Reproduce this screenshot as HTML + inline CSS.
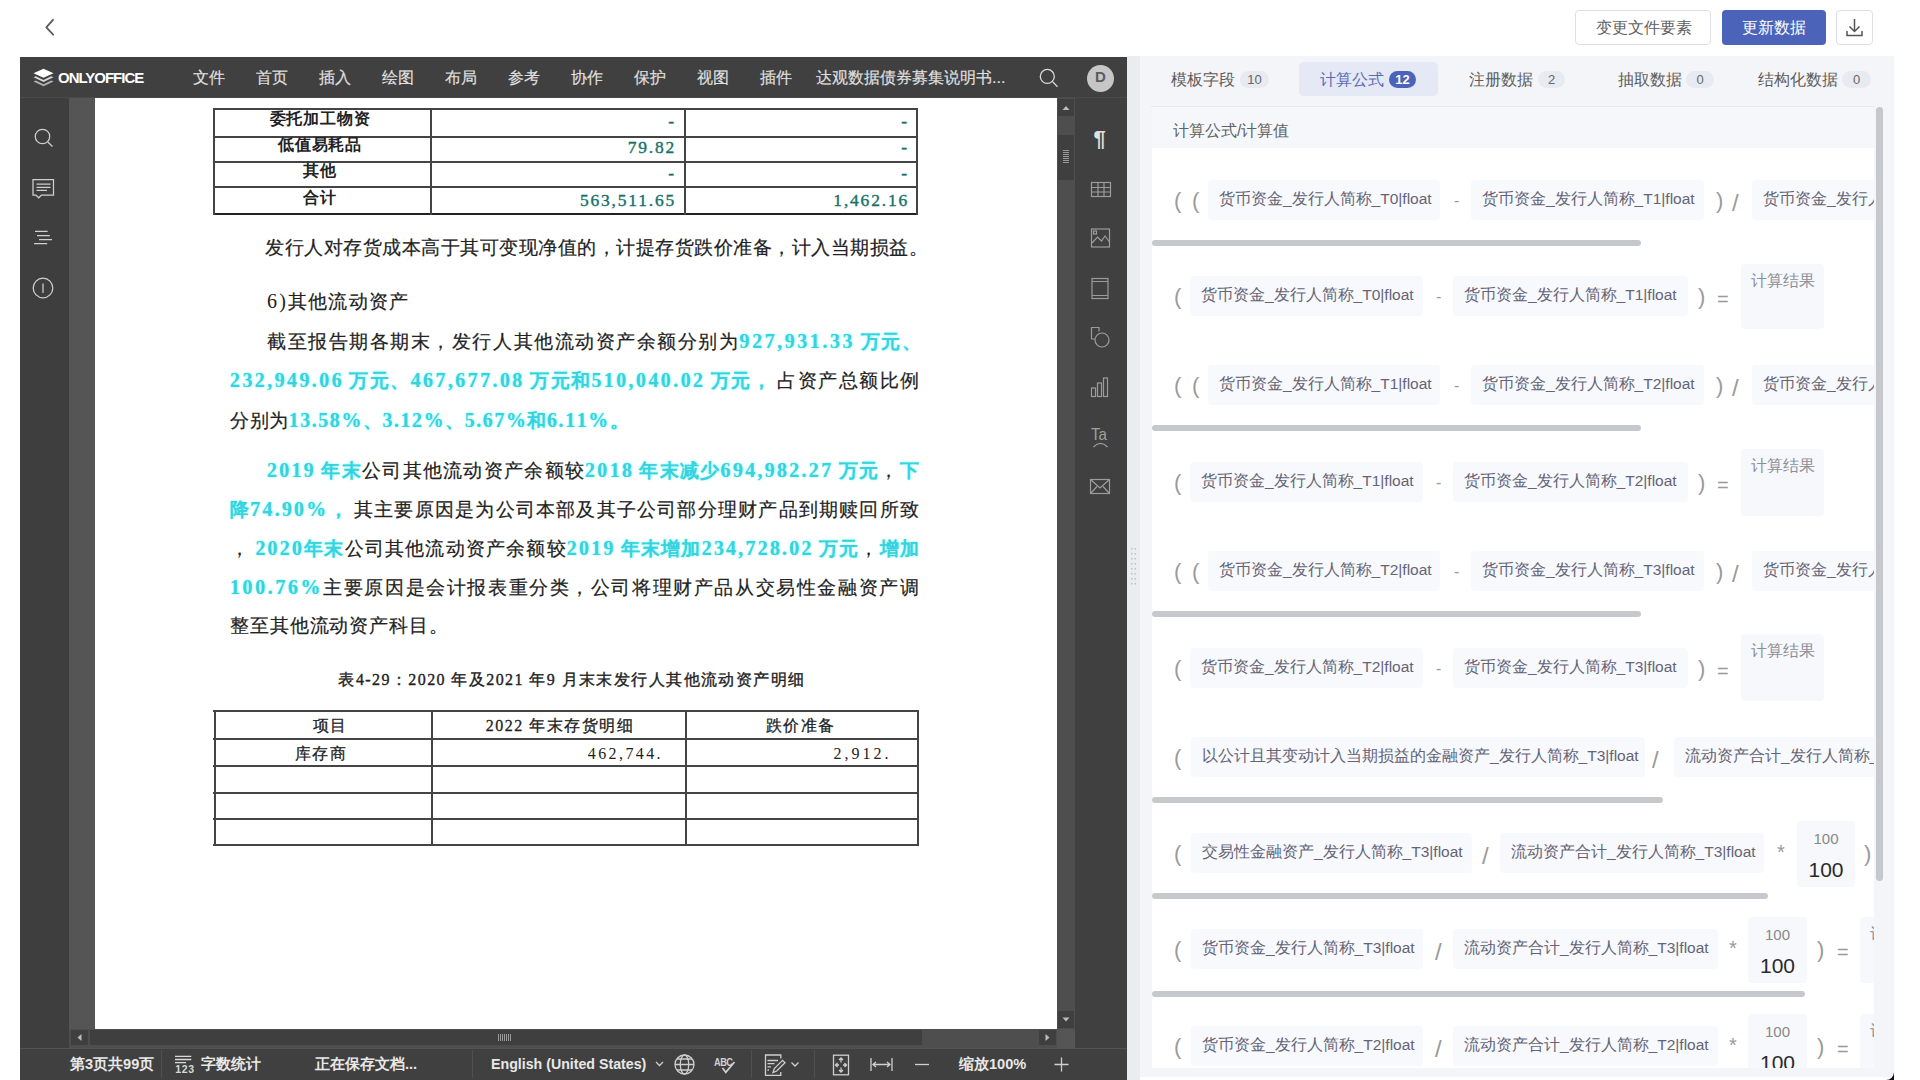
<!DOCTYPE html>
<html><head><meta charset="utf-8"><title>ONLYOFFICE</title>
<style>
*{margin:0;padding:0;box-sizing:border-box}
html,body{width:1920px;height:1080px;overflow:hidden;background:#fff}
body{position:relative;font-family:"Liberation Sans",sans-serif}
.a{position:absolute}
.t{white-space:nowrap}
svg{position:absolute;overflow:visible}
.doc{font-family:"Liberation Serif",serif;color:#222;font-size:18px}
.fl{display:flex;align-items:baseline;white-space:nowrap}
.fl span{display:inline-block}
.fl .C{font-size:19px;-webkit-text-stroke:0.2px #222}
.fl .L{font-size:20px;padding-right:1px}
.fl .sp{width:4px}
.fl .C.cy{font-weight:bold;-webkit-text-stroke:0}
.fl .L.cy{font-weight:bold}
.cy{color:#3ad0dd;text-shadow:0 0 1px #7ff,0 0 3px #aff}
.teal{color:#1f6e66;text-shadow:0 0 2px #cff;-webkit-text-stroke:0.35px #1f6e66}
.chip{position:absolute;height:40px;background:#f8f9fc;border-radius:4px;color:#646476;font-size:15.5px;line-height:37px;padding-left:11px;white-space:nowrap;overflow:hidden}
.op{position:absolute;color:#9a9a9a;white-space:nowrap}
.hsb{position:absolute;height:6px;background:#c5c8cc;border-radius:3px;left:1152px}
.rbox{position:absolute;background:#f7f8fb;border-radius:4px}
</style></head><body>

<svg style="left:0;top:0" width="1920" height="57"><path d="M53 19.8 L46.3 27.4 L53.2 34.6" fill="none" stroke="#5a5a5a" stroke-width="1.8" stroke-linecap="round" stroke-linejoin="round"/></svg>
<div class="a" style="left:1575px;top:10px;width:136px;height:35px;border:1px solid #dcdfe6;border-radius:4px;background:#fff"></div>
<div class="a t" style="left:1596px;top:19px;font-size:15.5px;color:#606060;line-height:18px">变更文件要素</div>
<div class="a" style="left:1722px;top:10px;width:104px;height:35px;background:#4b63b8;border-radius:4px"></div>
<div class="a t" style="left:1742px;top:19px;font-size:15.5px;color:#fff;line-height:18px">更新数据</div>
<div class="a" style="left:1836px;top:10px;width:37px;height:35px;border:1px solid #dcdfe6;border-radius:4px;background:#fff"></div>
<svg style="left:1836px;top:10px" width="37" height="35"><g fill="none" stroke="#555" stroke-width="1.5"><path d="M18.5 9 V21 M13.5 16.5 L18.5 21.5 L23.5 16.5"/><path d="M11 21 V25.5 H26 V21"/></g></svg>
<div class="a" style="left:20px;top:57px;width:1107px;height:1023px;background:#404040"></div>
<div class="a" style="left:20px;top:57px;width:1107px;height:41px;background:#404040"></div>
<svg style="left:33px;top:68px" width="22" height="20"><g fill="#fff">
<path d="M10.5 0.8 L20.5 5.3 L10.5 9.8 L0.5 5.3 Z"/>
<path d="M0.5 9.3 L2.8 8.3 L10.5 11.9 L18.2 8.3 L20.5 9.3 L10.5 14 Z" opacity="0.8"/>
<path d="M0.5 13.6 L2.8 12.6 L10.5 16.2 L18.2 12.6 L20.5 13.6 L10.5 18.3 Z" opacity="0.6"/>
</g></svg>
<div class="a t" style="left:58px;top:69px;font-size:15px;font-weight:bold;color:#fff;letter-spacing:-1px;line-height:17px">ONLYOFFICE</div>
<div class="a t" style="left:193px;top:68px;font-size:16px;color:#e0e0e0;line-height:19px;-webkit-text-stroke:0.15px #e0e0e0">文件</div>
<div class="a t" style="left:256px;top:68px;font-size:16px;color:#e0e0e0;line-height:19px;-webkit-text-stroke:0.15px #e0e0e0">首页</div>
<div class="a t" style="left:319px;top:68px;font-size:16px;color:#e0e0e0;line-height:19px;-webkit-text-stroke:0.15px #e0e0e0">插入</div>
<div class="a t" style="left:382px;top:68px;font-size:16px;color:#e0e0e0;line-height:19px;-webkit-text-stroke:0.15px #e0e0e0">绘图</div>
<div class="a t" style="left:445px;top:68px;font-size:16px;color:#e0e0e0;line-height:19px;-webkit-text-stroke:0.15px #e0e0e0">布局</div>
<div class="a t" style="left:508px;top:68px;font-size:16px;color:#e0e0e0;line-height:19px;-webkit-text-stroke:0.15px #e0e0e0">参考</div>
<div class="a t" style="left:571px;top:68px;font-size:16px;color:#e0e0e0;line-height:19px;-webkit-text-stroke:0.15px #e0e0e0">协作</div>
<div class="a t" style="left:634px;top:68px;font-size:16px;color:#e0e0e0;line-height:19px;-webkit-text-stroke:0.15px #e0e0e0">保护</div>
<div class="a t" style="left:697px;top:68px;font-size:16px;color:#e0e0e0;line-height:19px;-webkit-text-stroke:0.15px #e0e0e0">视图</div>
<div class="a t" style="left:760px;top:68px;font-size:16px;color:#e0e0e0;line-height:19px;-webkit-text-stroke:0.15px #e0e0e0">插件</div>
<div class="a t" style="left:816px;top:68px;font-size:16px;color:#e0e0e0;line-height:19px;-webkit-text-stroke:0.15px #e0e0e0">达观数据债券募集说明书...</div>
<svg style="left:1038px;top:66px" width="24" height="24"><g fill="none" stroke="#dcdcdc" stroke-width="1.3"><circle cx="9.3" cy="10.4" r="7"/><path d="M14.3 15.4 L19.5 20.7"/></g></svg>
<div class="a" style="left:1087px;top:64.5px;width:27px;height:27px;border-radius:50%;background:#c6c6c6"></div>
<div class="a t" style="left:1095px;top:67.5px;font-size:15px;font-weight:bold;color:#5c5c5c;line-height:18px">D</div>
<div class="a" style="left:20px;top:97px;width:1107px;height:1px;background:#4a4a4a"></div>
<div class="a" style="left:20px;top:98px;width:49px;height:950px;background:#3e3e3e"></div>
<svg style="left:20px;top:98px" width="49" height="220"><g fill="none" stroke="#d0d0d0" stroke-width="1.25">
<circle cx="22.5" cy="38.5" r="7.2"/><path d="M27.8 44 L32.5 48.5"/>
<path d="M13 81.5 H33.5 V97 H21.5 L18.7 99.8 L15.9 97 H13 Z"/><path d="M16.5 86 H30.5 M16.5 89.3 H30.5 M16.5 92.3 H27"/>
<path d="M15 133.3 H27.6 M17 137.6 H29.8 M19 141.6 H32 M14 145.7 H27.2"/>
<circle cx="23" cy="190" r="9.8"/><path d="M23 185.5 V195"/>
</g></svg>
<div class="a" style="left:69px;top:98px;width:1006px;height:950px;background:#555"></div>
<div class="a" style="left:95px;top:98px;width:962px;height:931px;background:#fff"></div>
<div class="a" style="left:1057px;top:98px;width:18px;height:931px;background:#4e4e4e"></div>
<div class="a" style="left:1058px;top:99px;width:16px;height:17px;background:#3f3f3f"></div>
<svg style="left:1058px;top:99px" width="16" height="17"><path d="M4.5 11 L8 7 L11.5 11 Z" fill="#bbb"/></svg>
<div class="a" style="left:1058px;top:135px;width:16px;height:45px;background:#3f3f3f;border-radius:1px"></div>
<svg style="left:1058px;top:135px" width="16" height="45"><g stroke="#999" stroke-width="1"><path d="M5 15.5 H11 M5 17.5 H11 M5 19.5 H11 M5 21.5 H11 M5 23.5 H11 M5 25.5 H11 M5 27.5 H11"/></g></svg>
<div class="a" style="left:1058px;top:1011px;width:16px;height:17px;background:#3f3f3f"></div>
<svg style="left:1058px;top:1011px" width="16" height="17"><path d="M4.5 6.5 L8 10.5 L11.5 6.5 Z" fill="#bbb"/></svg>
<div class="a" style="left:69px;top:1029px;width:988px;height:19px;background:#4e4e4e"></div>
<div class="a" style="left:71px;top:1030px;width:17px;height:15px;background:#3f3f3f"></div>
<svg style="left:71px;top:1030px" width="17" height="15"><path d="M10.5 4 L6.5 7.5 L10.5 11 Z" fill="#bbb"/></svg>
<div class="a" style="left:90px;top:1030px;width:832px;height:15px;background:#3f3f3f"></div>
<svg style="left:490px;top:1030px" width="30" height="15"><g stroke="#999" stroke-width="1"><path d="M8.5 4 V11 M10.5 4 V11 M12.5 4 V11 M14.5 4 V11 M16.5 4 V11 M18.5 4 V11 M20.5 4 V11"/></g></svg>
<div class="a" style="left:1039px;top:1030px;width:17px;height:15px;background:#3f3f3f"></div>
<svg style="left:1039px;top:1030px" width="17" height="15"><path d="M6.5 4 L10.5 7.5 L6.5 11 Z" fill="#bbb"/></svg>
<div class="a" style="left:1075px;top:98px;width:52px;height:950px;background:#404040"></div>
<svg style="left:1075px;top:98px" width="52" height="420"><g fill="none" stroke="#9c9c9c" stroke-width="1.2">
<rect x="16.5" y="84.5" width="19" height="14"/><path d="M16.5 89.5 H35.5 M16.5 94 H35.5 M23 84.5 V98.5 M29 84.5 V98.5"/>
<rect x="16.5" y="131" width="18" height="18"/><rect x="18.5" y="133" width="3" height="3"/><path d="M17 145 L22.5 139 L26.5 143 L30 138 L34.5 144"/>
<rect x="17" y="180.5" width="16" height="20"/><path d="M17 183.5 H33 M17 197.5 H33"/>
<path d="M24 233.5 V229.5 H16.5 V241 H20"/><circle cx="27" cy="242" r="7"/>
<rect x="16.5" y="290" width="4" height="8.5"/><rect x="22.5" y="285" width="4" height="13.5"/><rect x="28.5" y="280" width="4" height="18.5"/>
<path d="M18.5 349 Q25.5 342 32.5 349"/>
<rect x="15.5" y="381.5" width="19" height="14"/><path d="M15.5 381.5 L25 390 L34.5 381.5 M15.5 395.5 L22 388.5 M34.5 395.5 L28 388.5"/>
</g>
<text x="16" y="342" font-family="Liberation Sans" font-size="17" fill="#a0a0a0" textLength="16" lengthAdjust="spacingAndGlyphs">Ta</text>
<text x="18.5" y="48" font-family="Liberation Sans" font-size="22" font-weight="bold" fill="#e0e0e0">¶</text>
</svg>
<div class="a" style="left:20px;top:1048px;width:1107px;height:32px;background:#404040;border-top:1px solid #525252"></div>
<div class="a t" style="left:70px;top:1056px;font-size:14.6px;font-weight:bold;color:#e8e8e8;line-height:17px">第3页共99页</div>
<div class="a" style="left:161px;top:1050px;width:1px;height:28px;background:#505050"></div>
<svg style="left:172px;top:1053px" width="24" height="24"><g fill="none" stroke="#d8d8d8" stroke-width="1.3"><path d="M3 3.3 H19.3 M3 6.5 H19.3 M3 9.7 H14"/></g><text x="3.3" y="19.8" font-family="Liberation Sans" font-weight="bold" font-size="10.5" letter-spacing="0.6" fill="#d8d8d8">123</text></svg>
<div class="a t" style="left:201px;top:1056px;font-size:14.6px;font-weight:bold;color:#e8e8e8;line-height:17px">字数统计</div>
<div class="a t" style="left:315px;top:1056px;font-size:14.6px;font-weight:bold;color:#e8e8e8;line-height:17px">正在保存文档...</div>
<div class="a" style="left:472px;top:1050px;width:1px;height:28px;background:#505050"></div>
<div class="a t" style="left:491px;top:1056px;font-size:14.6px;font-weight:bold;color:#e8e8e8;line-height:17px;font-size:14.2px">English (United States)</div>
<svg style="left:650px;top:1050px" width="420" height="30"><g fill="none" stroke="#cfcfcf" stroke-width="1.3">
<path d="M6 12 L9.5 15.5 L13 12"/>
<circle cx="34.5" cy="14.5" r="9.5"/><ellipse cx="34.5" cy="14.5" rx="4.2" ry="9.5"/><path d="M25 14.5 H44 M27 9 H42 M27 20 H42"/>
<path d="M130.8 8.5 V5 H115.5 V25.3 H130.8 V22"/><path d="M117.5 10.5 H128 M117.5 13.7 H124.5 M117.5 16.8 H121 M117.5 20 H119"/><path d="M123 22.5 L124.3 18.6 L132.6 10.3 L135 12.7 L126.7 21 Z"/>
<path d="M141.5 12.5 L145 16 L148.5 12.5"/>
<rect x="183.5" y="5.2" width="15" height="19.6"/><path d="M191 8 V12.5 M189 10 L191 8 L193 10 M191 22 V17.5 M189 20 L191 22 L193 20 M185.5 15 H189 M187.5 13 L185.5 15 L187.5 17 M196.5 15 H193 M194.5 13 L196.5 15 L194.5 17"/>
<path d="M221 8 V21 M242 8 V21 M223 14.5 H240 M226 12 L223 14.5 L226 17 M237 12 L240 14.5 L237 17"/>
<path d="M265 14.5 H279"/>
<path d="M411.5 7.5 V21.5 M404.5 14.5 H418.5"/>
</g>
<text x="64" y="15.5" font-family="Liberation Sans" font-size="11" font-weight="bold" fill="#d0d0d0" letter-spacing="-0.6" textLength="18.5" lengthAdjust="spacingAndGlyphs">ABC</text>
<path d="M72.5 18 L75.8 22.3 L84.5 12" fill="none" stroke="#d0d0d0" stroke-width="1.7"/>
</svg>
<div class="a" style="left:751px;top:1050px;width:1px;height:28px;background:#505050"></div>
<div class="a" style="left:814px;top:1050px;width:1px;height:28px;background:#505050"></div>
<div class="a t" style="left:959px;top:1056px;font-size:14.6px;font-weight:bold;color:#e8e8e8;line-height:17px">缩放100%</div>
<div class="a" style="left:1127px;top:56px;width:13px;height:1024px;background:#ebecef"></div>
<svg style="left:1127px;top:545px" width="13" height="45"><g fill="#c0c0c0"><rect x="4" y="3" width="1.5" height="1.5"/><rect x="7.5" y="3" width="1.5" height="1.5"/><rect x="4" y="8" width="1.5" height="1.5"/><rect x="7.5" y="8" width="1.5" height="1.5"/><rect x="4" y="13" width="1.5" height="1.5"/><rect x="7.5" y="13" width="1.5" height="1.5"/><rect x="4" y="18" width="1.5" height="1.5"/><rect x="7.5" y="18" width="1.5" height="1.5"/><rect x="4" y="23" width="1.5" height="1.5"/><rect x="7.5" y="23" width="1.5" height="1.5"/><rect x="4" y="28" width="1.5" height="1.5"/><rect x="7.5" y="28" width="1.5" height="1.5"/><rect x="4" y="33" width="1.5" height="1.5"/><rect x="7.5" y="33" width="1.5" height="1.5"/><rect x="4" y="38" width="1.5" height="1.5"/><rect x="7.5" y="38" width="1.5" height="1.5"/></g></svg>
<div class="a" style="left:1140px;top:56px;width:754px;height:1021px;background:#f4f5f8"></div>
<div class="a t" style="left:1171px;top:71px;font-size:15.5px;line-height:18px;color:#5c5c5c">模板字段</div>
<div class="a t" style="left:1240px;top:71px;width:29px;height:17px;border-radius:9px;background:#e8eaf2;color:#666;font-size:13px;line-height:17px;text-align:center;font-weight:normal">10</div>
<div class="a" style="left:1299px;top:62px;width:139px;height:34px;background:#e5e8f5;border-radius:5px"></div>
<div class="a t" style="left:1320px;top:71px;font-size:15.5px;line-height:18px;color:#5a6cb4">计算公式</div>
<div class="a t" style="left:1389px;top:71px;width:27px;height:17px;border-radius:9px;background:#4b63b8;color:#fff;font-size:13px;line-height:17px;text-align:center;font-weight:bold">12</div>
<div class="a t" style="left:1469px;top:71px;font-size:15.5px;line-height:18px;color:#5c5c5c">注册数据</div>
<div class="a t" style="left:1538px;top:71px;width:27px;height:17px;border-radius:9px;background:#e8eaf2;color:#666;font-size:13px;line-height:17px;text-align:center;font-weight:normal">2</div>
<div class="a t" style="left:1618px;top:71px;font-size:15.5px;line-height:18px;color:#5c5c5c">抽取数据</div>
<div class="a t" style="left:1686px;top:71px;width:28px;height:17px;border-radius:9px;background:#e8eaf2;color:#666;font-size:13px;line-height:17px;text-align:center;font-weight:normal">0</div>
<div class="a t" style="left:1758px;top:71px;font-size:15.5px;line-height:18px;color:#5c5c5c">结构化数据</div>
<div class="a t" style="left:1842px;top:71px;width:29px;height:17px;border-radius:9px;background:#e8eaf2;color:#666;font-size:13px;line-height:17px;text-align:center;font-weight:normal">0</div>
<div class="a" style="left:1151px;top:106px;width:723px;height:1px;background:#e6e8ec"></div>
<div class="a" style="left:1152px;top:107px;width:722px;height:961px;background:#fff;overflow:hidden">
<div class="a" style="left:0px;top:0px;width:722px;height:41px;background:#f6f7fa"></div>
<div class="a t" style="left:21px;top:15px;font-size:15.7px;color:#606266;line-height:18px">计算公式/计算值</div>
<div class="op" style="left:22px;top:80.8px;font-size:22px;line-height:26.4px">(</div>
<div class="op" style="left:40px;top:80.8px;font-size:22px;line-height:26.4px">(</div>
<div class="chip" style="left:56px;top:73px;width:232px">货币资金_发行人简称_T0|float</div>
<div class="op" style="left:302px;top:84.4px;font-size:16px;line-height:19.2px">-</div>
<div class="chip" style="left:319px;top:73px;width:233px">货币资金_发行人简称_T1|float</div>
<div class="op" style="left:564px;top:80.8px;font-size:22px;line-height:26.4px">)</div>
<div class="op" style="left:580px;top:81.6px;font-size:24px;line-height:28.799999999999997px">/</div>
<div class="chip" style="left:600px;top:73px;width:238px">货币资金_发行人简称_T0|float</div>
<div class="hsb" style="left:0;top:133px;width:489px"></div>
<div class="op" style="left:22px;top:176.8px;font-size:22px;line-height:26.4px">(</div>
<div class="chip" style="left:38px;top:169px;width:233px">货币资金_发行人简称_T0|float</div>
<div class="op" style="left:284px;top:180.4px;font-size:16px;line-height:19.2px">-</div>
<div class="chip" style="left:301px;top:169px;width:235px">货币资金_发行人简称_T1|float</div>
<div class="op" style="left:546px;top:176.8px;font-size:22px;line-height:26.4px">)</div>
<div class="op" style="left:565px;top:180.0px;font-size:20px;line-height:24.0px">=</div>
<div class="rbox" style="left:589px;top:157px;width:83px;height:65px"></div>
<div class="a t" style="left:599px;top:165px;font-size:15.7px;color:#8a8f99;line-height:18px">计算结果</div>
<div class="op" style="left:22px;top:265.8px;font-size:22px;line-height:26.4px">(</div>
<div class="op" style="left:40px;top:265.8px;font-size:22px;line-height:26.4px">(</div>
<div class="chip" style="left:56px;top:258px;width:232px">货币资金_发行人简称_T1|float</div>
<div class="op" style="left:302px;top:269.4px;font-size:16px;line-height:19.2px">-</div>
<div class="chip" style="left:319px;top:258px;width:233px">货币资金_发行人简称_T2|float</div>
<div class="op" style="left:564px;top:265.8px;font-size:22px;line-height:26.4px">)</div>
<div class="op" style="left:580px;top:266.6px;font-size:24px;line-height:28.799999999999997px">/</div>
<div class="chip" style="left:600px;top:258px;width:238px">货币资金_发行人简称_T1|float</div>
<div class="hsb" style="left:0;top:318px;width:489px"></div>
<div class="op" style="left:22px;top:362.8px;font-size:22px;line-height:26.4px">(</div>
<div class="chip" style="left:38px;top:355px;width:233px">货币资金_发行人简称_T1|float</div>
<div class="op" style="left:284px;top:366.4px;font-size:16px;line-height:19.2px">-</div>
<div class="chip" style="left:301px;top:355px;width:235px">货币资金_发行人简称_T2|float</div>
<div class="op" style="left:546px;top:362.8px;font-size:22px;line-height:26.4px">)</div>
<div class="op" style="left:565px;top:366.0px;font-size:20px;line-height:24.0px">=</div>
<div class="rbox" style="left:589px;top:342px;width:83px;height:67px"></div>
<div class="a t" style="left:599px;top:350px;font-size:15.7px;color:#8a8f99;line-height:18px">计算结果</div>
<div class="op" style="left:22px;top:451.8px;font-size:22px;line-height:26.4px">(</div>
<div class="op" style="left:40px;top:451.8px;font-size:22px;line-height:26.4px">(</div>
<div class="chip" style="left:56px;top:444px;width:232px">货币资金_发行人简称_T2|float</div>
<div class="op" style="left:302px;top:455.4px;font-size:16px;line-height:19.2px">-</div>
<div class="chip" style="left:319px;top:444px;width:233px">货币资金_发行人简称_T3|float</div>
<div class="op" style="left:564px;top:451.8px;font-size:22px;line-height:26.4px">)</div>
<div class="op" style="left:580px;top:452.6px;font-size:24px;line-height:28.799999999999997px">/</div>
<div class="chip" style="left:600px;top:444px;width:238px">货币资金_发行人简称_T2|float</div>
<div class="hsb" style="left:0;top:504px;width:489px"></div>
<div class="op" style="left:22px;top:548.8px;font-size:22px;line-height:26.4px">(</div>
<div class="chip" style="left:38px;top:541px;width:233px">货币资金_发行人简称_T2|float</div>
<div class="op" style="left:284px;top:552.4px;font-size:16px;line-height:19.2px">-</div>
<div class="chip" style="left:301px;top:541px;width:235px">货币资金_发行人简称_T3|float</div>
<div class="op" style="left:546px;top:548.8px;font-size:22px;line-height:26.4px">)</div>
<div class="op" style="left:565px;top:552.0px;font-size:20px;line-height:24.0px">=</div>
<div class="rbox" style="left:589px;top:527px;width:83px;height:67px"></div>
<div class="a t" style="left:599px;top:535px;font-size:15.7px;color:#8a8f99;line-height:18px">计算结果</div>
<div class="op" style="left:22px;top:637.8px;font-size:22px;line-height:26.4px">(</div>
<div class="chip" style="left:39px;top:630px;width:454px">以公计且其变动计入当期损益的金融资产_发行人简称_T3|float</div>
<div class="op" style="left:500px;top:638.6px;font-size:24px;line-height:28.799999999999997px">/</div>
<div class="chip" style="left:522px;top:630px;width:316px">流动资产合计_发行人简称_T3|float</div>
<div class="hsb" style="left:0;top:690px;width:511px"></div>
<div class="op" style="left:22px;top:733.8px;font-size:22px;line-height:26.4px">(</div>
<div class="chip" style="left:39px;top:726px;width:281px">交易性金融资产_发行人简称_T3|float</div>
<div class="op" style="left:330px;top:734.6px;font-size:24px;line-height:28.799999999999997px">/</div>
<div class="chip" style="left:348px;top:726px;width:264px">流动资产合计_发行人简称_T3|float</div>
<div class="op" style="left:625px;top:733.0px;font-size:20px;line-height:24.0px">*</div>
<div class="rbox" style="left:645px;top:714px;width:58px;height:66px"></div>
<div class="a t" style="left:645px;top:723px;width:58px;text-align:center;font-size:15px;color:#888;line-height:18px">100</div>
<div class="a t" style="left:645px;top:751px;width:58px;text-align:center;font-size:21px;color:#2a2a2a;line-height:24px">100</div>
<div class="op" style="left:712px;top:733.8px;font-size:22px;line-height:26.4px">)</div>
<div class="hsb" style="left:0;top:786px;width:616px"></div>
<div class="op" style="left:22px;top:829.8px;font-size:22px;line-height:26.4px">(</div>
<div class="chip" style="left:39px;top:822px;width:232px">货币资金_发行人简称_T3|float</div>
<div class="op" style="left:283px;top:830.6px;font-size:24px;line-height:28.799999999999997px">/</div>
<div class="chip" style="left:301px;top:822px;width:265px">流动资产合计_发行人简称_T3|float</div>
<div class="op" style="left:577px;top:829.0px;font-size:20px;line-height:24.0px">*</div>
<div class="rbox" style="left:596px;top:810px;width:59px;height:66px"></div>
<div class="a t" style="left:596px;top:819px;width:59px;text-align:center;font-size:15px;color:#888;line-height:18px">100</div>
<div class="a t" style="left:596px;top:847px;width:59px;text-align:center;font-size:21px;color:#2a2a2a;line-height:24px">100</div>
<div class="op" style="left:665px;top:829.8px;font-size:22px;line-height:26.4px">)</div>
<div class="op" style="left:685px;top:833.0px;font-size:20px;line-height:24.0px">=</div>
<div class="rbox" style="left:708px;top:810px;width:90px;height:66px"></div>
<div class="a t" style="left:718px;top:818px;font-size:15.7px;color:#8a8f99;line-height:18px">计算结果</div>
<div class="hsb" style="left:0;top:884px;width:653px"></div>
<div class="op" style="left:22px;top:926.8px;font-size:22px;line-height:26.4px">(</div>
<div class="chip" style="left:39px;top:919px;width:232px">货币资金_发行人简称_T2|float</div>
<div class="op" style="left:283px;top:927.6px;font-size:24px;line-height:28.799999999999997px">/</div>
<div class="chip" style="left:301px;top:919px;width:265px">流动资产合计_发行人简称_T2|float</div>
<div class="op" style="left:577px;top:926.0px;font-size:20px;line-height:24.0px">*</div>
<div class="rbox" style="left:596px;top:907px;width:59px;height:66px"></div>
<div class="a t" style="left:596px;top:916px;width:59px;text-align:center;font-size:15px;color:#888;line-height:18px">100</div>
<div class="a t" style="left:596px;top:944px;width:59px;text-align:center;font-size:21px;color:#2a2a2a;line-height:24px">100</div>
<div class="op" style="left:665px;top:926.8px;font-size:22px;line-height:26.4px">)</div>
<div class="op" style="left:685px;top:930.0px;font-size:20px;line-height:24.0px">=</div>
<div class="rbox" style="left:708px;top:907px;width:90px;height:66px"></div>
<div class="a t" style="left:718px;top:915px;font-size:15.7px;color:#8a8f99;line-height:18px">计算结果</div>
</div>
<div class="a" style="left:1876px;top:107px;width:7px;height:774px;background:#c5c8cc;border-radius:4px"></div>
<svg style="left:1880px;top:1066px" width="20" height="14"><path d="M14 6 L14 14 L6 14 A8 8 0 0 0 14 6 Z" fill="#111"/></svg>
<div class="a doc" style="left:95px;top:98px;width:962px;height:931px;overflow:hidden">
<div class="a" style="left:118px;top:10px;width:704px;height:2px;background:#444"></div>
<div class="a" style="left:118px;top:38px;width:704px;height:2px;background:#444"></div>
<div class="a" style="left:118px;top:63px;width:704px;height:2px;background:#444"></div>
<div class="a" style="left:118px;top:88px;width:704px;height:2px;background:#444"></div>
<div class="a" style="left:118px;top:115px;width:704px;height:2px;background:#222"></div>
<div class="a" style="left:118px;top:10px;width:2px;height:107px;background:#444"></div>
<div class="a" style="left:335px;top:10px;width:2px;height:107px;background:#444"></div>
<div class="a" style="left:589px;top:10px;width:2px;height:107px;background:#444"></div>
<div class="a" style="left:821px;top:10px;width:2px;height:107px;background:#444"></div>
<div class="a t" style="left:75.0px;top:8.5px;width:300px;text-align:center;line-height:24px;font-size:16px;font-weight:bold;letter-spacing:0.8px">委托加工物资</div>
<div class="a t" style="left:75.0px;top:35.0px;width:300px;text-align:center;line-height:24px;font-size:16px;font-weight:bold;letter-spacing:0.8px">低值易耗品</div>
<div class="a t" style="left:75.0px;top:61.0px;width:300px;text-align:center;line-height:24px;font-size:16px;font-weight:bold;letter-spacing:0.8px">其他</div>
<div class="a t" style="left:75.0px;top:87.5px;width:300px;text-align:center;line-height:24px;font-size:16px;font-weight:bold;letter-spacing:0.8px">合计</div>
<div class="a t" style="left:281px;top:11.0px;width:300px;text-align:right;line-height:24px;font-size:17.5px;letter-spacing:1.8px"><span class="teal">-</span></div>
<div class="a t" style="left:281px;top:37.0px;width:300px;text-align:right;line-height:24px;font-size:17.5px;letter-spacing:1.8px"><span class="teal">79.82</span></div>
<div class="a t" style="left:281px;top:63.0px;width:300px;text-align:right;line-height:24px;font-size:17.5px;letter-spacing:1.8px"><span class="teal">-</span></div>
<div class="a t" style="left:281px;top:89.5px;width:300px;text-align:right;line-height:24px;font-size:17.5px;letter-spacing:1.8px"><span class="teal">563,511.65</span></div>
<div class="a t" style="left:514px;top:11.0px;width:300px;text-align:right;line-height:24px;font-size:17.5px;letter-spacing:1.8px"><span class="teal">-</span></div>
<div class="a t" style="left:514px;top:37.0px;width:300px;text-align:right;line-height:24px;font-size:17.5px;letter-spacing:1.8px"><span class="teal">-</span></div>
<div class="a t" style="left:514px;top:63.0px;width:300px;text-align:right;line-height:24px;font-size:17.5px;letter-spacing:1.8px"><span class="teal">-</span></div>
<div class="a t" style="left:514px;top:89.5px;width:300px;text-align:right;line-height:24px;font-size:17.5px;letter-spacing:1.8px"><span class="teal">1,462.16</span></div>
<div class="a fl" style="left:170px;top:137.0px;width:663px;height:26px;line-height:26px;justify-content:space-between"><span class="C ">发</span><span class="C ">行</span><span class="C ">人</span><span class="C ">对</span><span class="C ">存</span><span class="C ">货</span><span class="C ">成</span><span class="C ">本</span><span class="C ">高</span><span class="C ">于</span><span class="C ">其</span><span class="C ">可</span><span class="C ">变</span><span class="C ">现</span><span class="C ">净</span><span class="C ">值</span><span class="C ">的</span><span class="C ">，</span><span class="C ">计</span><span class="C ">提</span><span class="C ">存</span><span class="C ">货</span><span class="C ">跌</span><span class="C ">价</span><span class="C ">准</span><span class="C ">备</span><span class="C ">，</span><span class="C ">计</span><span class="C ">入</span><span class="C ">当</span><span class="C ">期</span><span class="C ">损</span><span class="C ">益</span><span class="C ">。</span></div>
<div class="a fl" style="left:172px;top:190.0px;width:141px;height:26px;line-height:26px;justify-content:space-between"><span class="L ">6</span><span class="L ">)</span><span class="C ">其</span><span class="C ">他</span><span class="C ">流</span><span class="C ">动</span><span class="C ">资</span><span class="C ">产</span></div>
<div class="a fl" style="left:172px;top:230.0px;width:654px;height:26px;line-height:26px;justify-content:space-between"><span class="C ">截</span><span class="C ">至</span><span class="C ">报</span><span class="C ">告</span><span class="C ">期</span><span class="C ">各</span><span class="C ">期</span><span class="C ">末</span><span class="C ">，</span><span class="C ">发</span><span class="C ">行</span><span class="C ">人</span><span class="C ">其</span><span class="C ">他</span><span class="C ">流</span><span class="C ">动</span><span class="C ">资</span><span class="C ">产</span><span class="C ">余</span><span class="C ">额</span><span class="C ">分</span><span class="C ">别</span><span class="C ">为</span><span class="L cy">9</span><span class="L cy">2</span><span class="L cy">7</span><span class="L cy">,</span><span class="L cy">9</span><span class="L cy">3</span><span class="L cy">1</span><span class="L cy">.</span><span class="L cy">3</span><span class="L cy">3</span><span class="sp"></span><span class="C cy">万</span><span class="C cy">元</span><span class="C cy">、</span></div>
<div class="a fl" style="left:135px;top:269.0px;width:689px;height:26px;line-height:26px;justify-content:space-between"><span class="L cy">2</span><span class="L cy">3</span><span class="L cy">2</span><span class="L cy">,</span><span class="L cy">9</span><span class="L cy">4</span><span class="L cy">9</span><span class="L cy">.</span><span class="L cy">0</span><span class="L cy">6</span><span class="sp"></span><span class="C cy">万</span><span class="C cy">元</span><span class="C cy">、</span><span class="L cy">4</span><span class="L cy">6</span><span class="L cy">7</span><span class="L cy">,</span><span class="L cy">6</span><span class="L cy">7</span><span class="L cy">7</span><span class="L cy">.</span><span class="L cy">0</span><span class="L cy">8</span><span class="sp"></span><span class="C cy">万</span><span class="C cy">元</span><span class="C cy">和</span><span class="L cy">5</span><span class="L cy">1</span><span class="L cy">0</span><span class="L cy">,</span><span class="L cy">0</span><span class="L cy">4</span><span class="L cy">0</span><span class="L cy">.</span><span class="L cy">0</span><span class="L cy">2</span><span class="sp"></span><span class="C cy">万</span><span class="C cy">元</span><span class="C cy">，</span><span class="sp"></span><span class="C ">占</span><span class="C ">资</span><span class="C ">产</span><span class="C ">总</span><span class="C ">额</span><span class="C ">比</span><span class="C ">例</span></div>
<div class="a fl" style="left:135px;top:308.5px;width:399px;height:26px;line-height:26px;justify-content:space-between"><span class="C ">分</span><span class="C ">别</span><span class="C ">为</span><span class="L cy">1</span><span class="L cy">3</span><span class="L cy">.</span><span class="L cy">5</span><span class="L cy">8</span><span class="L cy">%</span><span class="C cy">、</span><span class="L cy">3</span><span class="L cy">.</span><span class="L cy">1</span><span class="L cy">2</span><span class="L cy">%</span><span class="C cy">、</span><span class="L cy">5</span><span class="L cy">.</span><span class="L cy">6</span><span class="L cy">7</span><span class="L cy">%</span><span class="C cy">和</span><span class="L cy">6</span><span class="L cy">.</span><span class="L cy">1</span><span class="L cy">1</span><span class="L cy">%</span><span class="C cy">。</span></div>
<div class="a fl" style="left:172px;top:359.0px;width:652px;height:26px;line-height:26px;justify-content:space-between"><span class="L cy">2</span><span class="L cy">0</span><span class="L cy">1</span><span class="L cy">9</span><span class="sp"></span><span class="C cy">年</span><span class="C cy">末</span><span class="C ">公</span><span class="C ">司</span><span class="C ">其</span><span class="C ">他</span><span class="C ">流</span><span class="C ">动</span><span class="C ">资</span><span class="C ">产</span><span class="C ">余</span><span class="C ">额</span><span class="C ">较</span><span class="L cy">2</span><span class="L cy">0</span><span class="L cy">1</span><span class="L cy">8</span><span class="sp"></span><span class="C cy">年</span><span class="C cy">末</span><span class="C cy">减</span><span class="C cy">少</span><span class="L cy">6</span><span class="L cy">9</span><span class="L cy">4</span><span class="L cy">,</span><span class="L cy">9</span><span class="L cy">8</span><span class="L cy">2</span><span class="L cy">.</span><span class="L cy">2</span><span class="L cy">7</span><span class="sp"></span><span class="C cy">万</span><span class="C cy">元</span><span class="C ">，</span><span class="C cy">下</span></div>
<div class="a fl" style="left:135px;top:398.0px;width:689px;height:26px;line-height:26px;justify-content:space-between"><span class="C cy">降</span><span class="L cy">7</span><span class="L cy">4</span><span class="L cy">.</span><span class="L cy">9</span><span class="L cy">0</span><span class="L cy">%</span><span class="C cy">，</span><span class="sp"></span><span class="C ">其</span><span class="C ">主</span><span class="C ">要</span><span class="C ">原</span><span class="C ">因</span><span class="C ">是</span><span class="C ">为</span><span class="C ">公</span><span class="C ">司</span><span class="C ">本</span><span class="C ">部</span><span class="C ">及</span><span class="C ">其</span><span class="C ">子</span><span class="C ">公</span><span class="C ">司</span><span class="C ">部</span><span class="C ">分</span><span class="C ">理</span><span class="C ">财</span><span class="C ">产</span><span class="C ">品</span><span class="C ">到</span><span class="C ">期</span><span class="C ">赎</span><span class="C ">回</span><span class="C ">所</span><span class="C ">致</span></div>
<div class="a fl" style="left:135px;top:437.0px;width:689px;height:26px;line-height:26px;justify-content:space-between"><span class="C ">，</span><span class="sp"></span><span class="L cy">2</span><span class="L cy">0</span><span class="L cy">2</span><span class="L cy">0</span><span class="C cy">年</span><span class="C cy">末</span><span class="C ">公</span><span class="C ">司</span><span class="C ">其</span><span class="C ">他</span><span class="C ">流</span><span class="C ">动</span><span class="C ">资</span><span class="C ">产</span><span class="C ">余</span><span class="C ">额</span><span class="C ">较</span><span class="L cy">2</span><span class="L cy">0</span><span class="L cy">1</span><span class="L cy">9</span><span class="sp"></span><span class="C cy">年</span><span class="C cy">末</span><span class="C cy">增</span><span class="C cy">加</span><span class="L cy">2</span><span class="L cy">3</span><span class="L cy">4</span><span class="L cy">,</span><span class="L cy">7</span><span class="L cy">2</span><span class="L cy">8</span><span class="L cy">.</span><span class="L cy">0</span><span class="L cy">2</span><span class="sp"></span><span class="C cy">万</span><span class="C cy">元</span><span class="C ">，</span><span class="C cy">增</span><span class="C cy">加</span></div>
<div class="a fl" style="left:135px;top:475.5px;width:689px;height:26px;line-height:26px;justify-content:space-between"><span class="L cy">1</span><span class="L cy">0</span><span class="L cy">0</span><span class="L cy">.</span><span class="L cy">7</span><span class="L cy">6</span><span class="L cy">%</span><span class="C ">主</span><span class="C ">要</span><span class="C ">原</span><span class="C ">因</span><span class="C ">是</span><span class="C ">会</span><span class="C ">计</span><span class="C ">报</span><span class="C ">表</span><span class="C ">重</span><span class="C ">分</span><span class="C ">类</span><span class="C ">，</span><span class="C ">公</span><span class="C ">司</span><span class="C ">将</span><span class="C ">理</span><span class="C ">财</span><span class="C ">产</span><span class="C ">品</span><span class="C ">从</span><span class="C ">交</span><span class="C ">易</span><span class="C ">性</span><span class="C ">金</span><span class="C ">融</span><span class="C ">资</span><span class="C ">产</span><span class="C ">调</span></div>
<div class="a fl" style="left:135px;top:515.0px;width:218px;height:26px;line-height:26px;justify-content:space-between"><span class="C ">整</span><span class="C ">至</span><span class="C ">其</span><span class="C ">他</span><span class="C ">流</span><span class="C ">动</span><span class="C ">资</span><span class="C ">产</span><span class="C ">科</span><span class="C ">目</span><span class="C ">。</span></div>
<div class="a t" style="left:177.0px;top:570.0px;width:600px;text-align:center;line-height:24px;font-size:16px;letter-spacing:1.42px;-webkit-text-stroke:0.35px #222">表4-29：2020 年及2021 年9 月末末发行人其他流动资产明细</div>
<div class="a" style="left:118px;top:612px;width:705px;height:2px;background:#444"></div>
<div class="a" style="left:118px;top:640px;width:705px;height:2px;background:#444"></div>
<div class="a" style="left:118px;top:667px;width:705px;height:2px;background:#444"></div>
<div class="a" style="left:118px;top:694px;width:705px;height:2px;background:#444"></div>
<div class="a" style="left:118px;top:720px;width:705px;height:2px;background:#444"></div>
<div class="a" style="left:118px;top:746px;width:705px;height:2px;background:#444"></div>
<div class="a" style="left:119px;top:612px;width:2px;height:136px;background:#444"></div>
<div class="a" style="left:336px;top:612px;width:2px;height:136px;background:#444"></div>
<div class="a" style="left:590px;top:612px;width:2px;height:136px;background:#444"></div>
<div class="a" style="left:822px;top:612px;width:2px;height:136px;background:#444"></div>
<div class="a t" style="left:85.0px;top:616.0px;width:300px;text-align:center;line-height:24px;font-size:16px;letter-spacing:1.5px;-webkit-text-stroke:0.25px #222">项目</div>
<div class="a t" style="left:315.0px;top:616.0px;width:300px;text-align:center;line-height:24px;font-size:16px;letter-spacing:1.5px;-webkit-text-stroke:0.3px #222">2022 年末存货明细</div>
<div class="a t" style="left:555.5px;top:616.0px;width:300px;text-align:center;line-height:24px;font-size:16px;letter-spacing:1.5px;-webkit-text-stroke:0.25px #222">跌价准备</div>
<div class="a t" style="left:76.0px;top:644.0px;width:300px;text-align:center;line-height:24px;font-size:16px;letter-spacing:1.5px;-webkit-text-stroke:0.25px #222">库存商</div>
<div class="a t" style="left:268px;top:644.0px;width:300px;text-align:right;line-height:24px;font-size:16px;letter-spacing:1.5px;letter-spacing:2.4px">462,744.</div>
<div class="a t" style="left:496.5px;top:644.0px;width:300px;text-align:right;line-height:24px;font-size:16px;letter-spacing:1.5px;letter-spacing:3px">2,912.</div>
</div>
</body></html>
